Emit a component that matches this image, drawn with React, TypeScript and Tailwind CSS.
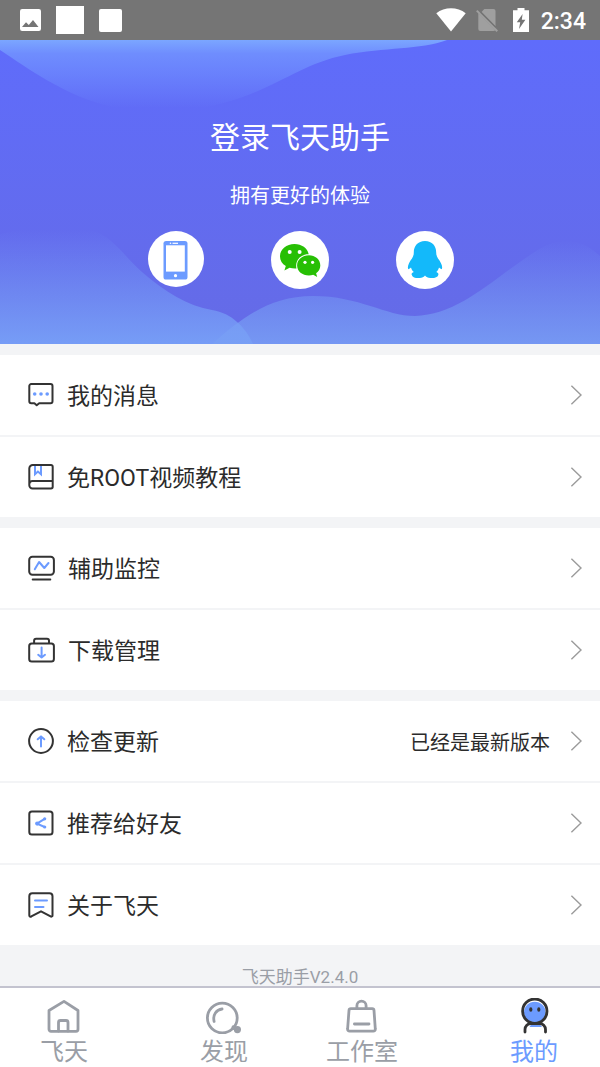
import type { ReactNode } from "react";

const INK = "#333333";
const ACCENT = "#6c9bff";
const MUTED = "#9a9ea6";

function StatusBar() {
  return (
    <header className="flex h-10 items-center justify-between bg-[#757575] pr-3.5 pl-5 text-white">
      <div className="flex items-center">
        <svg className="h-[22px] w-[21px]" viewBox="0 0 21 22" aria-hidden="true">
          <rect width="21" height="22" rx="2.2" fill="#fff" />
          <path d="M2 18 L6 13.2 L8.8 16 L13 11 L18.5 18 Z" fill="#757575" />
        </svg>
        <span className="ml-[15px] size-7 bg-white" />
        <span className="ml-[15px] size-[23px] rounded-[2px] bg-white" />
      </div>
      <div className="flex items-center">
        <svg className="h-6 w-[30px]" viewBox="0 0 30 24" aria-hidden="true">
          <path d="M15 23.5 L0.3 5.2 C8.5 -1.4 21.5 -1.4 29.7 5.2 Z" fill="#fff" />
        </svg>
        <svg className="ml-2.5 h-6 w-[22px]" viewBox="0 0 22 24" aria-hidden="true">
          <path d="M8.3 1 H17.5 a2 2 0 0 1 2 2 V18.3 L5.6 4 Z" fill="#9f9f9f" />
          <path d="M2.3 5 L19.3 22.2 Q18.6 23 17.5 23 H4.3 a2 2 0 0 1 -2 -2 Z" fill="#9f9f9f" />
          <path d="M0.8 2.6 L21.3 23.3" stroke="#9f9f9f" strokeWidth="2" />
          <path d="M4.6 4 L19.7 19.2" stroke="#757575" strokeWidth="1.2" />
        </svg>
        <svg className="ml-[15px] h-6 w-4" viewBox="0 0 16 24" aria-hidden="true">
          <path
            fillRule="evenodd"
            d="M4.5 0 H11.5 V2.2 H16 V24 H0 V2.2 H4.5 Z M9.6 6 L3.8 14.2 H7.2 L6 21 L12.4 11.8 H8.8 Z"
            fill="#fff"
          />
        </svg>
        <time className="ml-3 pt-1 text-[23px] leading-7 font-medium">2:34</time>
      </div>
    </header>
  );
}

function HeroWaves() {
  return (
    <svg
      className="absolute inset-0 size-full"
      viewBox="0 0 600 304"
      preserveAspectRatio="none"
      aria-hidden="true"
    >
      <defs>
        <linearGradient id="base" x1="0" y1="0" x2="0" y2="1">
          <stop offset="0" stopColor="#5f6cfb" />
          <stop offset="1" stopColor="#656be6" />
        </linearGradient>
        <linearGradient id="top" gradientUnits="userSpaceOnUse" x1="0" y1="0" x2="0" y2="68">
          <stop offset="0" stopColor="#7ba6ff" />
          <stop offset="0.2" stopColor="#6f8dfe" />
          <stop offset="1" stopColor="#6f8dfe" stopOpacity="0" />
        </linearGradient>
        <linearGradient id="left" gradientUnits="userSpaceOnUse" x1="0" y1="190" x2="0" y2="304">
          <stop offset="0" stopColor="#78a2f8" stopOpacity="0" />
          <stop offset="1" stopColor="#78a2f8" stopOpacity="0.9" />
        </linearGradient>
        <linearGradient id="right" gradientUnits="userSpaceOnUse" x1="0" y1="200" x2="0" y2="304">
          <stop offset="0" stopColor="#789ff5" stopOpacity="0" />
          <stop offset="1" stopColor="#789ff5" stopOpacity="0.85" />
        </linearGradient>
      </defs>
      <rect width="600" height="304" fill="url(#base)" />
      <path
        d="M0 10 C30 30 62 53 104 65 C150 78 200 72 240 58 C283 43 305 23 345 15 C385 7 420 10 447 0 H0 Z"
        fill="url(#top)"
      />
      <path
        d="M0 194 C40 184 75 184 97 192 C115 200 125 217 142 232 C165 252 188 266 212 270 C232 273 246 288 253 304 H0 Z"
        fill="url(#left)"
      />
      <path
        d="M212 304 C240 280 268 256 313 256 C360 256 385 276 415 276 C460 275 495 237 536 211 C560 196 580 197 600 216 V304 Z"
        fill="url(#right)"
      />
    </svg>
  );
}

function PhoneLogo() {
  return (
    <svg className="size-14" viewBox="0 0 56 56" aria-hidden="true">
      <rect x="15.5" y="10" width="24" height="38.5" rx="2.6" fill="#6c9bff" />
      <rect x="18" y="14.3" width="18.8" height="26.3" fill="#fff" />
      <path d="M24.5 12.3 H30" stroke="#fff" strokeWidth="1.2" />
      <circle cx="22.5" cy="12.3" r="0.8" fill="#fff" />
      <circle cx="27.5" cy="44.7" r="1.6" fill="#fff" />
    </svg>
  );
}

function WechatLogo() {
  return (
    <svg className="size-[58px]" viewBox="0 0 58 58" aria-hidden="true">
      <path
        d="M23.5 13 C15.3 13 9 18.3 9 25.4 C9 29.4 11.1 32.7 14.8 35.1 L13.4 39.4 L18.6 36.8 C20.3 37.3 22 37.5 24 37.5 H25.5 C23.6 29.8 29.6 23 37.7 23.2 C36.5 17.2 30.7 13 23.5 13 Z"
        fill="#27bf04"
      />
      <path
        d="M49.3 34.4 C49.3 28.5 44.1 24.3 37.9 24.3 C31.3 24.3 26.1 28.7 26.1 34.4 C26.1 40.1 31.3 44.4 37.9 44.4 C39.4 44.4 40.9 44.1 42.2 43.7 L46.2 46 L45.1 42.2 C47.7 40.3 49.3 37.6 49.3 34.4 Z"
        fill="#27bf04"
      />
      <circle cx="18.7" cy="21" r="2" fill="#fff" />
      <circle cx="28.6" cy="21" r="2" fill="#fff" />
      <circle cx="34" cy="31.3" r="1.6" fill="#fff" />
      <circle cx="41.6" cy="31.3" r="1.6" fill="#fff" />
    </svg>
  );
}

function QqLogo() {
  return (
    <svg className="size-[58px]" viewBox="0 0 58 58" aria-hidden="true">
      <path
        d="M29 10 C21.8 10 17.8 15 17.8 21.4 C17.8 23.8 17.2 25.6 16 27.6 C13.2 31.2 11.4 35 12 37.6 C12.5 39 14 37.3 15 36.6 C15.5 38.3 16.3 39.8 17.8 41 C15.8 41.6 15.3 42.8 15.8 44 C16.6 46.7 20.5 47.4 23.7 47 C26 46.7 28 45.8 29 44.4 C30 45.8 32 46.7 34.3 47 C37.8 47.4 41.6 46.6 42.3 44 C42.7 42.6 42 41.6 40.3 41 C41.7 39.8 42.5 38.3 43 36.6 C44 37.3 45.6 39 46 37.6 C46.7 35 44.8 31.2 42 27.6 C40.8 25.6 40.2 23.8 40.2 21.4 C40.2 15 36.2 10 29 10 Z"
        fill="#13b9fa"
      />
    </svg>
  );
}

function Hero() {
  return (
    <section className="relative h-[304px]">
      <HeroWaves />
      <div className="relative flex flex-col items-center pt-[76px] text-white">
        <h1 className="text-[30px] leading-11">登录飞天助手</h1>
        <p className="mt-[22px] text-xl leading-7">拥有更好的体验</p>
        <div className="mt-[21px] flex items-start gap-[67px] pl-0.5">
          <button type="button" aria-label="手机登录" className="rounded-full bg-white">
            <PhoneLogo />
          </button>
          <button type="button" aria-label="微信登录" className="rounded-full bg-white">
            <WechatLogo />
          </button>
          <button type="button" aria-label="QQ登录" className="rounded-full bg-white">
            <QqLogo />
          </button>
        </div>
      </div>
    </section>
  );
}

function MenuIcon({ wide = false, children }: { wide?: boolean; children: ReactNode }) {
  return (
    <svg
      className={wide ? "h-7 w-[27px] shrink-0" : "h-7 w-[26px] shrink-0"}
      viewBox={wide ? "0 0 27 28" : "0 0 26 28"}
      fill="none"
      stroke={INK}
      strokeWidth="2"
      strokeLinecap="round"
      strokeLinejoin="round"
      aria-hidden="true"
    >
      {children}
    </svg>
  );
}

const messageIcon = (
  <MenuIcon>
    <path d="M3 3 H22.5 a2 2 0 0 1 2 2 V20.3 a2 2 0 0 1 -2 2 H11.2 L8.7 24.3 L6.4 22.3 H3.3 a2 2 0 0 1 -2 -2 V5 a2 2 0 0 1 2 -2 Z" />
    <g fill={ACCENT} stroke="none">
      <circle cx="6.7" cy="13" r="1.8" />
      <circle cx="13" cy="13" r="1.8" />
      <circle cx="19.2" cy="13" r="1.8" />
    </g>
  </MenuIcon>
);

const tutorialIcon = (
  <MenuIcon>
    <path d="M7 3 V11.3 L9.9 8.6 L13 11.3 V3" stroke={ACCENT} strokeLinecap="butt" strokeLinejoin="miter" />
    <path d="M5 2 H23 a1.7 1.7 0 0 1 1.7 1.7 V23.8 a1.7 1.7 0 0 1 -1.7 1.7 H4.5 a3.2 3.2 0 0 1 -3.2 -3.2 V5.5 a3.5 3.5 0 0 1 3.5 -3.5 Z M1.4 21 a3 3 0 0 1 3 -3 H24.5" />
  </MenuIcon>
);

const monitorIcon = (
  <MenuIcon wide>
    <rect x="1.2" y="2.8" width="24.7" height="18" rx="3.2" />
    <path d="M4.7 25.5 H22.3" />
    <path d="M6.8 15.3 L11.1 8 L16.3 14 L20.5 9" stroke={ACCENT} />
  </MenuIcon>
);

const downloadIcon = (
  <MenuIcon wide>
    <rect x="1.2" y="7.4" width="24.7" height="18.2" rx="2.6" />
    <path d="M6.1 7 V4.8 a2 2 0 0 1 2 -2 H19 a2 2 0 0 1 2 2 V7" />
    <path d="M13.6 11.5 V21.4 M10.2 18.8 L13.6 21.5 L17 18.8" stroke={ACCENT} />
  </MenuIcon>
);

const updateIcon = (
  <MenuIcon>
    <circle cx="13" cy="14" r="11.9" />
    <path d="M13 19.5 V9.7 M9.7 12.3 L13 9.4 L16.3 12.3" stroke={ACCENT} />
  </MenuIcon>
);

const shareIcon = (
  <MenuIcon>
    <rect x="1.3" y="2.4" width="23.2" height="23.2" rx="2.6" />
    <path d="M16.6 9.8 L9 14.6 L16.6 18" stroke={ACCENT} />
    <g fill={ACCENT} stroke="none">
      <circle cx="16.7" cy="9.8" r="1.6" />
      <circle cx="9.2" cy="14.6" r="2.1" />
      <circle cx="16.7" cy="18" r="1.6" />
    </g>
  </MenuIcon>
);

const aboutIcon = (
  <MenuIcon>
    <path d="M4.3 2.2 H21.5 a3 3 0 0 1 3 3 V24.4 a1.2 1.2 0 0 1 -1.9 1 L13 20.3 L3.3 25.4 a1.2 1.2 0 0 1 -2 -1 V5.2 a3 3 0 0 1 3 -3 Z" />
    <path d="M7 9.6 H19 M7 16 H15.5" stroke={ACCENT} />
  </MenuIcon>
);

type Item = { label: string; icon: ReactNode; note?: string };

const groups: Item[][] = [
  [
    { label: "我的消息", icon: messageIcon },
    { label: "免ROOT视频教程", icon: tutorialIcon },
  ],
  [
    { label: "辅助监控", icon: monitorIcon },
    { label: "下载管理", icon: downloadIcon },
  ],
  [
    { label: "检查更新", icon: updateIcon, note: "已经是最新版本" },
    { label: "推荐给好友", icon: shareIcon },
    { label: "关于飞天", icon: aboutIcon },
  ],
];

function MenuGroup({ items }: { items: Item[] }) {
  return (
    <ul className="mt-[11px] divide-y-2 divide-[#f3f4f6] bg-white">
      {items.map((item) => (
        <li key={item.label}>
          <a href="#" className="flex h-20 items-center pr-[18px] pl-7">
            {item.icon}
            <span className="ml-[13px] pt-1 text-[23px] leading-8">{item.label}</span>
            <span className="ml-auto pt-1 text-xl leading-7">{item.note}</span>
            <svg
              className="ml-5 h-5 w-3"
              viewBox="0 0 12 20"
              fill="none"
              stroke="#9b9b9b"
              strokeWidth="1.4"
              aria-hidden="true"
            >
              <path d="M1.4 0.7 L11 10 L1.4 19.3" />
            </svg>
          </a>
        </li>
      ))}
    </ul>
  );
}

function Tab({ label, active = false, children }: { label: string; active?: boolean; children: ReactNode }) {
  return (
    <a
      href="#"
      aria-current={active ? "page" : undefined}
      className={
        active
          ? "flex flex-col items-center gap-0.5 text-2xl leading-8 text-[#6c9bff]"
          : "flex flex-col items-center gap-0.5 text-2xl leading-8 text-[#9a9ea6]"
      }
    >
      <svg
        className="h-9 w-9"
        viewBox="0 0 36 36"
        fill="none"
        stroke={active ? INK : MUTED}
        strokeWidth="2.8"
        strokeLinecap="round"
        strokeLinejoin="round"
        aria-hidden="true"
      >
        {children}
      </svg>
      {label}
    </a>
  );
}

function TabBar() {
  return (
    <nav className="flex h-[81px] items-start justify-between border-t-2 border-[#c3c3cf] bg-white pt-[10px] pr-[42px] pl-10">
      <Tab label="飞天">
        <path d="M18 3.4 L32 12.5 V31.3 a2 2 0 0 1 -2 2 H5 a2 2 0 0 1 -2 -2 V12.5 Z" />
        <path d="M12.5 33 V24.5 a2 2 0 0 1 2 -2 H20 a2 2 0 0 1 2 2 V33" />
      </Tab>
      <div className="flex gap-[78px]">
        <Tab label="发现">
          <circle cx="16.3" cy="20" r="14.9" />
          <path d="M8.1 23.5 C6.6 17 10.3 11.5 16.1 11" />
          <circle cx="31.4" cy="31.6" r="3.6" fill={MUTED} stroke="none" />
          <path d="M27.4 29.4 L31 31.5" strokeWidth="4" />
        </Tab>
        <Tab label="工作室">
          <path d="M7 10.7 H28.2 a1.8 1.8 0 0 1 1.8 1.6 L31.3 31 a2 2 0 0 1 -2 2.2 H5.6 a2 2 0 0 1 -2 -2.2 L5 12.3 a1.8 1.8 0 0 1 1.8 -1.6 Z" />
          <path d="M12.9 10.5 V7.8 a4.6 4.6 0 0 1 9.2 0 V10.5 M10.4 26 H25" />
        </Tab>
      </div>
      <Tab label="我的" active>
        <circle cx="18.8" cy="14.5" r="10.8" fill={ACCENT} stroke="none" />
        <path d="M13.5 29 H26 L23.5 26 H15.5 Z" fill={ACCENT} stroke="none" />
        <circle cx="18.8" cy="13.2" r="12.2" />
        <path d="M9 34 V31.5 a6 6 0 0 1 6 -6 H23.5 a6 6 0 0 1 6 6 V34" />
        <g fill={INK} stroke="none">
          <ellipse cx="14.8" cy="11.5" rx="1.6" ry="2.3" />
          <ellipse cx="22.8" cy="11.5" rx="1.6" ry="2.3" />
        </g>
      </Tab>
    </nav>
  );
}

export default function App() {
  return (
    <div className="flex min-h-screen flex-col bg-[#f3f4f6] font-[Roboto,'Noto_Sans_CJK_SC',sans-serif] text-[#2b2b2b]">
      <StatusBar />
      <main className="flex grow flex-col">
        <Hero />
        {groups.map((items) => (
          <MenuGroup key={items[0].label} items={items} />
        ))}
        <p className="mt-auto pt-5 text-center text-[17px] leading-[18px] text-[#9a9ea6]">飞天助手V2.4.0</p>
      </main>
      <TabBar />
    </div>
  );
}
